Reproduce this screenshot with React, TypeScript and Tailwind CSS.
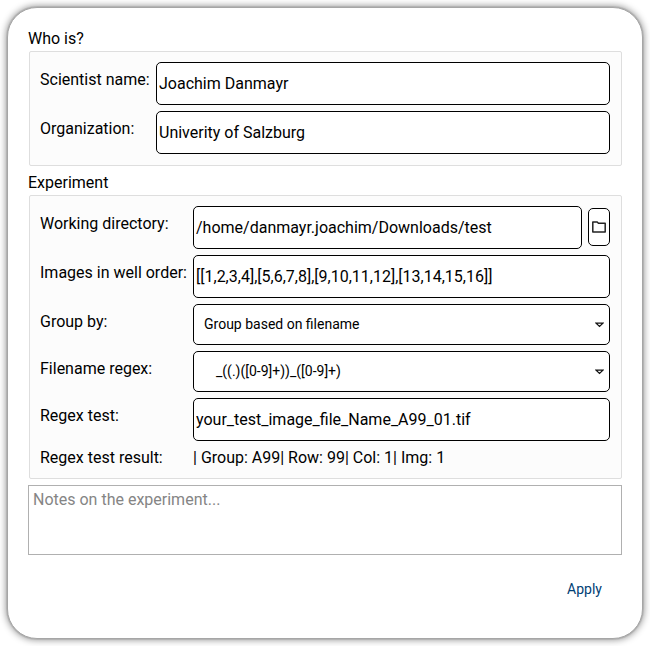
import type { ReactNode } from "react";

const font = "font-['Roboto',sans-serif]";
const field = "box-border block min-w-0 w-full rounded-[5px] border border-black bg-white text-black";

function Label({ children }: { children: ReactNode }) {
  return <div className="pt-2 text-base leading-[19px] whitespace-nowrap">{children}</div>;
}

function TextField({ value }: { value: string }) {
  return <input className={field + " h-[43px] px-[2px] text-base outline-none"} defaultValue={value} />;
}

function Select({ children, indent }: { children: ReactNode; indent: string }) {
  return (
    <div className={field + " flex h-[41px] items-center justify-between pr-[5px] text-sm " + indent}>
      <span className="pb-0.5">{children}</span>
      <svg width="9" height="6" viewBox="0 0 9 6" fill="none" stroke="#111" strokeWidth="1.3">
        <path d="M1 1.1H8L4.5 4.4Z" />
      </svg>
    </div>
  );
}

function Group({ children, className }: { children: ReactNode; className: string }) {
  return (
    <div className={"ml-px grid content-start gap-1.5 rounded-[2px] border border-[#dedede] bg-[#fcfcfc] pt-2.5 pr-[11px] pl-2.5 " + className}>
      {children}
    </div>
  );
}

export default function App() {
  return (
    <div className={"h-[646px] w-[650px] overflow-hidden bg-white pt-[7px] pl-[7px] text-black " + font}>
      <div className="flex h-[632px] w-[636px] flex-col rounded-[30px] border border-[#a6a6a6] bg-white pt-[21px] pr-5 pl-5 shadow-[0_0_0_1px_rgba(0,0,0,0.08),0_0_7px_1px_rgba(0,0,0,0.42)]">
        <div className="h-[22px] text-base leading-[19px]">Who is?</div>
        <Group className="h-[115px] grid-cols-[110px_1fr]">
          <Label>Scientist name:</Label>
          <TextField value="Joachim Danmayr" />
          <Label>Organization:</Label>
          <TextField value="Univerity of Salzburg" />
        </Group>
        <div className="mt-[7px] h-[22px] text-base leading-[19px]">Experiment</div>
        <Group className="h-[284px] grid-cols-[147px_1fr]">
          <Label>Working directory:</Label>
          <div className="flex items-start gap-1.5">
            <TextField value="/home/danmayr.joachim/Downloads/test" />
            <button className="mt-0.5 flex h-[38px] w-[22px] shrink-0 items-center justify-center rounded-[5px] border border-black bg-white">
              <svg width="14" height="12" viewBox="0 0 14 12" fill="none" stroke="#222" strokeWidth="1.5" strokeLinejoin="round">
                <path d="M.8 1H5.2L6.4 2.2H13.2V11H.8Z" />
              </svg>
            </button>
          </div>
          <Label>Images in well order:</Label>
          <TextField value="[[1,2,3,4],[5,6,7,8],[9,10,11,12],[13,14,15,16]]" />
          <Label>Group by:</Label>
          <Select indent="pl-2.5">Group based on filename</Select>
          <Label>Filename regex:</Label>
          <Select indent="pl-[22px]">_((.)([0-9]+))_([0-9]+)</Select>
          <Label>Regex test:</Label>
          <TextField value="your_test_image_file_Name_A99_01.tif" />
          <div className="pt-px text-base leading-[19px]">Regex test result:</div>
          <div className="pt-px text-base leading-[19px]">| Group: A99| Row: 99| Col: 1| Img: 1</div>
        </Group>
        <textarea
          className="mt-1.5 box-border block h-[70px] w-full resize-none border border-[#b0b0b0] px-1 py-1 text-base leading-[19px] outline-none placeholder:text-[#858585]"
          placeholder="Notes on the experiment..."
        />
        <div className="mt-[25px] flex justify-end pr-5">
          <button className="text-sm leading-[19px] text-[#003e74]">Apply</button>
        </div>
      </div>
    </div>
  );
}
